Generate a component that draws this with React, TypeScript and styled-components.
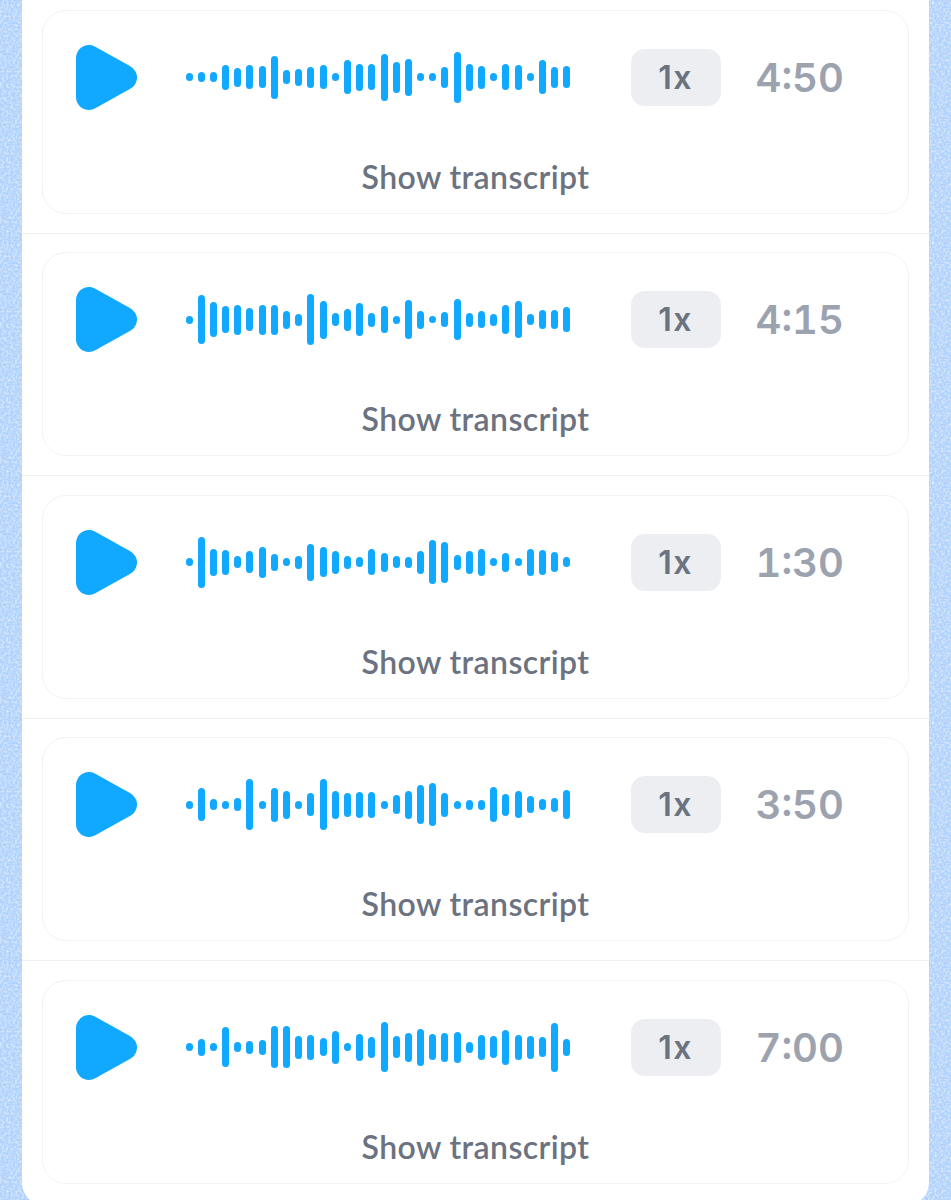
import styled, { createGlobalStyle } from 'styled-components';

type Message = {
  id: number;
  duration: string;
  bars: number[];
};

const messages: Message[] = [
  {
    id: 1,
    duration: '4:50',
    bars: [8, 10, 10, 25, 19, 24, 22, 43, 14, 17, 21, 24, 8, 34, 27, 26, 47, 31, 37, 8, 8, 21, 51, 27, 23, 8, 26, 25, 8, 34, 21, 22],
  },
  {
    id: 2,
    duration: '4:15',
    bars: [8, 49, 35, 27, 30, 23, 30, 30, 18, 12, 51, 38, 13, 22, 33, 14, 27, 8, 39, 18, 7, 15, 41, 14, 17, 12, 29, 37, 11, 19, 19, 25],
  },
  {
    id: 3,
    duration: '1:30',
    bars: [8, 51, 27, 25, 12, 22, 31, 17, 8, 13, 37, 30, 23, 13, 10, 26, 19, 12, 11, 23, 44, 41, 15, 23, 27, 8, 19, 8, 27, 25, 20, 10],
  },
  {
    id: 4,
    duration: '3:50',
    bars: [8, 33, 11, 8, 13, 51, 8, 34, 28, 8, 23, 51, 28, 24, 26, 26, 8, 19, 28, 39, 43, 24, 8, 10, 10, 35, 22, 27, 17, 11, 14, 29],
  },
  {
    id: 5,
    duration: '7:00',
    bars: [8, 17, 8, 40, 10, 13, 15, 42, 42, 23, 25, 18, 33, 8, 27, 21, 50, 22, 29, 37, 26, 29, 31, 11, 25, 22, 35, 25, 23, 20, 49, 17],
  },
];

const noise = encodeURIComponent(
  `<svg xmlns="http://www.w3.org/2000/svg" width="240" height="240"><filter id="n"><feTurbulence type="fractalNoise" baseFrequency="0.45" numOctaves="2" stitchTiles="stitch"/><feColorMatrix values="0 0 0 0 1 0 0 0 0 1 0 0 0 0 1 0 0 0 1.4 -0.55"/></filter><rect width="240" height="240" filter="url(#n)"/></svg>`,
);

const GlobalStyle = createGlobalStyle`
  html, body {
    margin: 0;
    padding: 0;
  }

  body {
    height: 1200px;
    overflow: hidden;
    background-color: #b0d1fb;
    background-image: url("data:image/svg+xml,${noise}");
    font-family: Inter, "Liberation Sans", sans-serif;
  }
`;

const PlayIcon = () => (
  <PlaySvg viewBox="0 0 61 65" aria-hidden="true">
    <path d="M13 13V52L48 32.5Z" fill="#11a8ff" stroke="#11a8ff" strokeWidth="26" strokeLinejoin="round" />
  </PlaySvg>
);

export default function App() {
  return (
    <>
      <GlobalStyle />
      <Panel>
        {messages.map((message) => (
          <Item key={message.id}>
            <Card>
              <Player>
                <PlayIcon />
                <Wave>
                  {message.bars.map((height, i) => (
                    <Bar key={i} style={{ height }} />
                  ))}
                </Wave>
                <Speed>1x</Speed>
                <Duration>{message.duration}</Duration>
              </Player>
              <Transcript>Show transcript</Transcript>
            </Card>
          </Item>
        ))}
      </Panel>
    </>
  );
}

const Panel = styled.main`
  box-sizing: border-box;
  width: 907px;
  height: 1205px;
  margin-left: 22px;
  padding-top: 9.9px;
  background: #fff;
  border-radius: 0 0 22px 22px;
  overflow: hidden;
`;

const Item = styled.section`
  box-sizing: border-box;
  height: 224px;
  margin-bottom: 18.5px;
  padding: 0 20px;
  border-bottom: 1px solid #f0f1f3;

  &:last-child {
    border-bottom: 0;
  }
`;

const Card = styled.div`
  box-sizing: border-box;
  height: 204px;
  padding: 34px 33px 0;
  background: #fff;
  border: 1px solid #f2f3f5;
  border-radius: 24px;
`;

const Player = styled.div`
  display: flex;
  align-items: center;
  height: 65px;
`;

const PlaySvg = styled.svg`
  flex: none;
  width: 61px;
  height: 65px;
`;

const Wave = styled.div`
  display: flex;
  flex: none;
  align-items: center;
  justify-content: space-between;
  width: 385px;
  height: 65px;
  margin-left: 48.5px;
`;

const Bar = styled.span`
  width: 7px;
  border-radius: 4px;
  background: #11a8ff;
`;

const Speed = styled.div`
  display: flex;
  flex: none;
  align-items: center;
  justify-content: center;
  width: 90px;
  height: 57px;
  margin-left: 60px;
  border-radius: 14px;
  background: #eceef1;
  color: #6b7280;
  font-size: 32px;
  font-weight: 600;
  letter-spacing: 1.5px;
`;

const Duration = styled.div`
  margin-left: 35px;
  color: #9ca3af;
  font-size: 40px;
  font-weight: 600;
  font-variant-numeric: tabular-nums;
`;

const Transcript = styled.div`
  margin-top: 47px;
  color: #6b7280;
  font-family: Lato, Inter, sans-serif;
  font-size: 32px;
  font-weight: 600;
  letter-spacing: 0.4px;
  line-height: 40px;
  text-align: center;
`;
